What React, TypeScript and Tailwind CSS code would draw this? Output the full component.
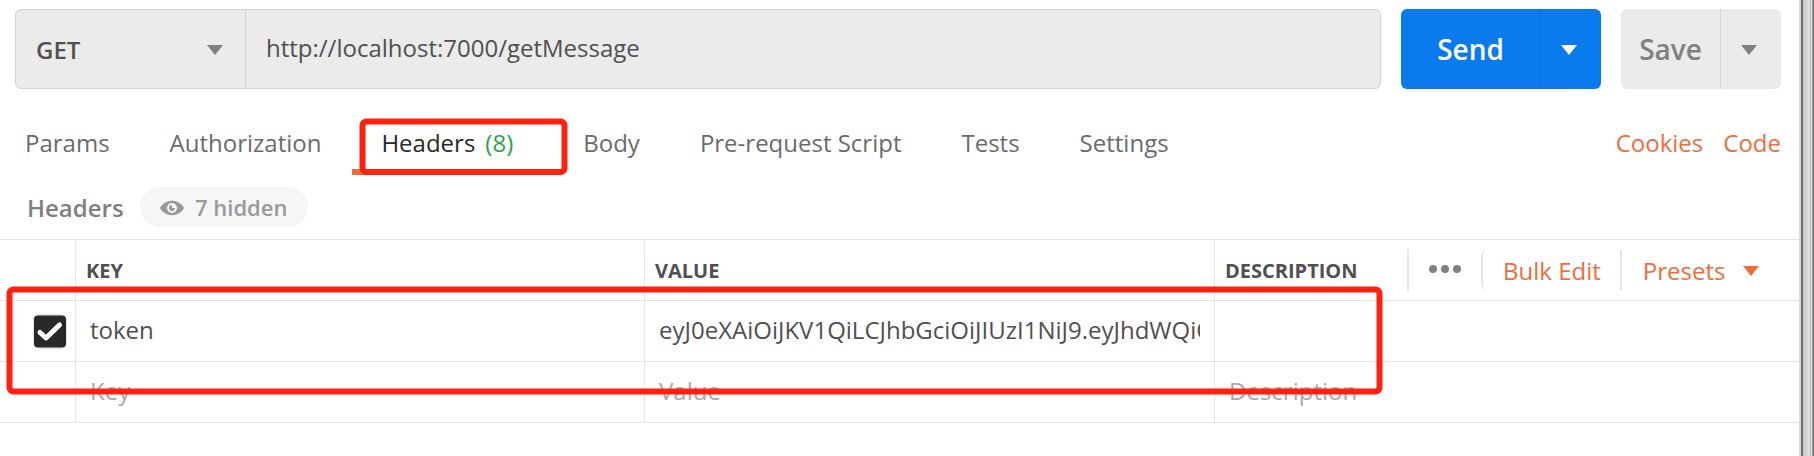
import React from "react";

const tabs = [
  { label: "Params" },
  { label: "Authorization" },
  { label: "Headers", count: "(8)", active: true },
  { label: "Body" },
  { label: "Pre-request Script" },
  { label: "Tests" },
  { label: "Settings" },
];

function Caret({ className }: { className: string }) {
  return (
    <svg width="16" height="10" viewBox="0 0 16 10" className={`shrink-0 ${className}`}>
      <path d="M0 0H16L8 10Z" fill="currentColor" />
    </svg>
  );
}

function RequestBar() {
  return (
    <div className="flex h-20 pl-[15px]">
      <div className="flex w-[1366px] rounded-md border border-[#d4d4d4] bg-[#ebebeb]">
        <div className="flex w-[230px] items-center justify-between border-r border-[#d4d4d4] pl-5 pr-[22px] font-semibold text-[#505050]">
          <span className="pt-0.5">GET</span>
          <Caret className="mt-0.5 text-[#808080]" />
        </div>
        <div className="flex items-center pb-0.5 pl-5 text-[#505050]">http://localhost:7000/getMessage</div>
      </div>
      <button className="ml-5 flex w-[200px] rounded-md bg-[#097bed] text-[28px] font-semibold text-white">
        <span className="flex h-full w-[140px] items-center justify-center border-r border-[#0a6fd6] pt-0.5">Send</span>
        <span className="flex h-full flex-1 items-center justify-center pr-1 pt-0.5">
          <Caret className="text-white" />
        </span>
      </button>
      <button className="ml-5 flex w-[160px] rounded-md bg-[#ebebeb] text-[28px] font-semibold text-[#808080]">
        <span className="flex h-full w-[100px] items-center justify-center border-r border-[#d4d4d4] pt-0.5">Save</span>
        <span className="flex h-full flex-1 items-center justify-center pr-1 pt-0.5">
          <Caret className="text-[#808080]" />
        </span>
      </button>
    </div>
  );
}

function TabBar() {
  return (
    <div className="mt-[30px] flex h-14 justify-between pr-[18px]">
      <nav className="flex pl-[25px] text-[#6b6b6b]">
        {tabs.map((t, i) => (
          <div key={t.label} className={`relative h-14 pt-[7px] leading-[34px] ${i === 0 ? "pr-[30px]" : "px-[30px]"}`}>
            {t.active ? (
              <>
                <span className="text-[#282828]">{t.label}</span>
                <span className="ml-2.5 pr-[10px] text-[#29a44b]">{t.count}</span>
                <span className="absolute bottom-0 left-px h-1.5 w-[201px] bg-[#f26b3a]" />
              </>
            ) : (
              t.label
            )}
          </div>
        ))}
      </nav>
      <div className="flex gap-5 pt-[7px] leading-[34px] text-[#f26b3a]">
        <span>Cookies</span>
        <span>Code</span>
      </div>
    </div>
  );
}

function SubHeader() {
  return (
    <div className="mt-3 flex h-10 items-center pl-[27px]">
      <span className="w-[113px] pt-0.5 font-semibold text-[#808080]">Headers</span>
      <div className="flex h-10 w-[168px] items-center rounded-full bg-[#f6f6f6] pl-5 text-[22px] font-semibold text-[#999999]">
        <svg width="24" height="16" viewBox="0 0 24 16" className="mr-[11px] mt-0.5 shrink-0">
          <path d="M0 8C5.5-1.6 18.5-1.6 24 8C18.5 17.6 5.5 17.6 0 8Z" fill="#999999" />
          <circle cx="12" cy="8" r="5" fill="#f6f6f6" />
          <path d="M12 5A3 3 0 1 0 15 8H12Z" fill="#999999" />
        </svg>
        <span className="whitespace-nowrap pt-0.5">7 hidden</span>
      </div>
    </div>
  );
}

function Table() {
  const row = "grid grid-cols-[75px_569px_570px_1fr] border-b border-[#e6e6e6]";
  const cell = "border-l border-[#e6e6e6] flex items-center h-[60px]";
  return (
    <div className="mt-3 border-t border-[#e6e6e6] text-[#505050]">
      <div className={`${row} text-xl font-bold`}>
        <div />
        <div className={`${cell} pl-2.5 pt-0.5`}>KEY</div>
        <div className={`${cell} pl-2.5 pt-0.5`}>VALUE</div>
        <div className={`${cell} pl-2.5`}>
          <span className="w-[182px] pt-0.5">DESCRIPTION</span>
          <div className="flex h-[43px] items-center border-l-2 border-[#e6e6e6] pb-0.5 pl-5 text-[#808080]">
            <svg width="32" height="8" viewBox="0 0 32 8" fill="currentColor">
              <circle cx="4" cy="4" r="4" />
              <circle cx="16" cy="4" r="4" />
              <circle cx="28" cy="4" r="4" />
            </svg>
          </div>
          <div className="ml-5 flex h-10 items-center rounded-l-md border-l-2 border-[#e6e6e6] pl-5 pt-0.5 text-2xl font-normal text-[#f26b3a]">Bulk Edit</div>
          <div className="ml-[19px] flex h-10 items-center gap-[18px] border-l-2 border-[#e6e6e6] pl-[21px] pt-0.5 text-2xl font-normal text-[#f26b3a]">
            Presets
            <Caret className="text-[#f26b3a]" />
          </div>
        </div>
      </div>
      <div className={row}>
        <div className="flex items-center pl-[33px]">
          <svg width="34" height="35" viewBox="0 0 34 35" fill="none">
            <rect width="34" height="35" rx="6" fill="#e6e6e6" />
            <rect x="1" y="1.5" width="32" height="32" rx="4" fill="#282828" />
            <path d="M7 18.5L13 24L26.5 11" stroke="white" strokeWidth="5" strokeLinecap="round" strokeLinejoin="round" />
          </svg>
        </div>
        <div className={`${cell} pb-0.5 pl-3.5`}>token</div>
        <div className={`${cell} px-3.5 pb-0.5`}>
          <span className="w-full overflow-hidden whitespace-nowrap">eyJ0eXAiOiJKV1QiLCJhbGciOiJIUzI1NiJ9.eyJhdWQiO</span>
        </div>
        <div className={cell} />
      </div>
      <div className={`${row} text-[#a9a9a9]`}>
        <div />
        <div className={`${cell} pb-0.5 pl-3.5`}>Key</div>
        <div className={`${cell} pb-0.5 pl-3.5`}>Value</div>
        <div className={`${cell} pb-0.5 pl-3.5`}>Description</div>
      </div>
    </div>
  );
}

function Annotations() {
  return (
    <svg className="pointer-events-none absolute inset-0" width="1814" height="456" fill="none" stroke="#ff2010" strokeWidth="6">
      <rect x="362.5" y="121.5" width="202" height="50.5" rx="4" />
      <rect x="9.5" y="289.5" width="1370" height="102" rx="4" />
    </svg>
  );
}

export default function App() {
  return (
    <div className="relative flex h-[456px] w-[1814px] overflow-hidden bg-white font-['Open_Sans',sans-serif] text-2xl">
      <main className="w-[1799px] shrink-0 pt-[9px]">
        <RequestBar />
        <TabBar />
        <SubHeader />
        <Table />
      </main>
      <div className="flex h-full flex-1">
        <div className="w-[2px] bg-[#dcdcdc]" />
        <div className="w-[2px] bg-[#6d6d6d]" />
        <div className="w-[7px] bg-linear-to-r from-[#c8c8c8] to-[#e0e0e0]" />
        <div className="w-[1px] bg-[#bbbbbb]" />
        <div className="w-[1px] bg-[#e0e0e0]" />
        <div className="w-[1px] bg-[#a0a0a0]" />
        <div className="flex-1 bg-[#6d6d6d]" />
      </div>
      <Annotations />
    </div>
  );
}
